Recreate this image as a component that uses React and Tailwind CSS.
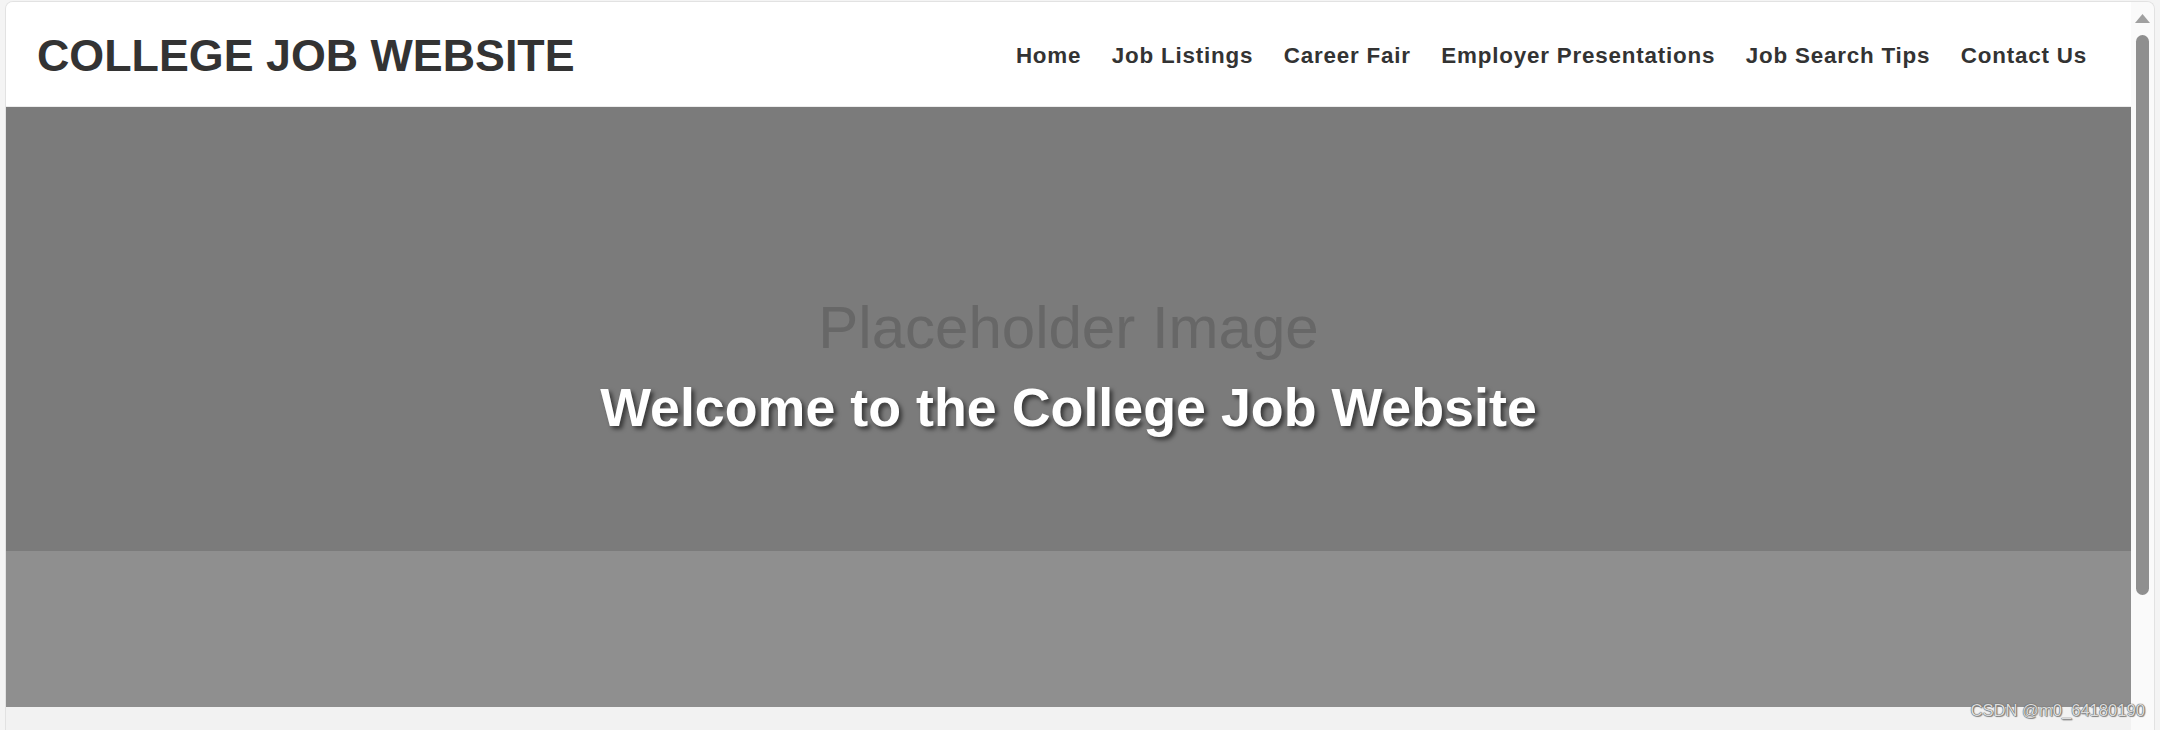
// ── College Job Website ──────────────────────────────────────────────────────
// Browser-framed landing page: header with nav, hero placeholder, gray band.

const NAV_ITEMS = [
  'Home',
  'Job Listings',
  'Career Fair',
  'Employer Presentations',
  'Job Search Tips',
  'Contact Us',
]

// ── Scrollbar ────────────────────────────────────────────────────────────────

function Scrollbar() {
  return (
    <div className="flex w-[23px] shrink-0 flex-col items-center bg-[#fafafa]">
      <svg width="15" height="9" viewBox="0 0 15 9" className="mt-[12px]" aria-hidden="true">
        <path d="M7.5 0L15 9H0Z" fill="#a0a0a0" />
      </svg>
      <div className="mt-[12px] h-[560px] w-[13px] rounded-full bg-[#8f8f8f]" />
    </div>
  )
}

// ── Header ───────────────────────────────────────────────────────────────────

function Header() {
  return (
    <header className="flex h-[105px] shrink-0 items-center justify-between border-b border-[#ececec] bg-white pl-[31px] pr-[44px] pt-[1px]">
      <h1 className="text-[44.8px] font-bold leading-[50px] text-[#333333]">COLLEGE JOB WEBSITE</h1>
      <nav className="pt-[4px]">
        <ul className="flex items-center gap-[30.5px]">
          {NAV_ITEMS.map((item) => (
            <li key={item}>
              <a className="text-[22.4px] font-bold leading-[25px] tracking-[0.8px] text-[#333333]">{item}</a>
            </li>
          ))}
        </ul>
      </nav>
    </header>
  )
}

// ── Hero ─────────────────────────────────────────────────────────────────────

function Hero() {
  return (
    <section className="flex h-[444px] shrink-0 flex-col items-center bg-[#7b7b7b] pt-[191px]">
      <div className="text-[60px] leading-[60px] text-[#676767]">Placeholder Image</div>
      <h2 className="mt-[22px] text-[53.8px] font-bold leading-[54px] text-white [text-shadow:3px_3px_4px_rgba(0,0,0,0.55)]">
        Welcome to the College Job Website
      </h2>
    </section>
  )
}

export default function App() {
  return (
    <div className="relative h-[730px] w-[2160px] overflow-hidden bg-[#f4f4f4] px-[5px] pt-px font-['Liberation_Sans',Arial,sans-serif]">
      <div className="flex h-full overflow-hidden rounded-t-[8px] border-x border-t border-[#e2e2e2]">
        <div className="flex flex-1 flex-col bg-[#f2f2f2]">
          <Header />
          <Hero />
          <section className="h-[156px] shrink-0 bg-[#8f8f8f]" />
        </div>
        <Scrollbar />
      </div>

      {/* watermark */}
      <div className="absolute right-[15px] top-[702px] text-[16.6px] leading-[17px] text-[#dcdcdc] [text-shadow:0_0_1px_#555,0_0_1px_#555,1px_1px_1px_#888]">
        CSDN @m0_64180190
      </div>
    </div>
  )
}
